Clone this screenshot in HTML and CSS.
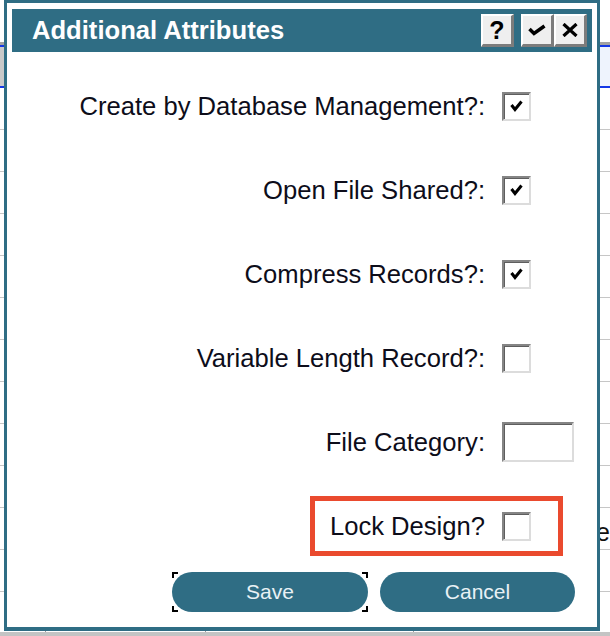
FILE: index.html
```html
<!DOCTYPE html>
<html lang="en">
<head>
    <meta charset="UTF-8">
    <meta name="viewport" content="width=device-width, initial-scale=1.0">
    <title>Additional Attributes</title>
    <link rel="stylesheet" href="styles.css">
</head>
<body>
    <!-- Spreadsheet behind the dialog -->
    <div class="sheet">
        <div class="sheet-head"></div>
        <div class="toolbar"></div>
        <div class="grid"></div>
        <div class="grid-foot"></div>
        <span class="peek">ep</span>
    </div>

    <div class="dialog">
        <div class="titlebar">
            <span class="title">Additional Attributes</span>
            <div class="title-buttons">
                <button class="tb-btn help">?</button>
                <div class="tb-pair">
                    <button class="tb-btn">
                        <svg width="18" height="12" viewBox="0 0 18 12"><polyline points="1.5,5 6,9.5 16.5,2" fill="none" stroke="#000" stroke-width="3.5"/></svg>
                    </button>
                    <button class="tb-btn">
                        <svg width="16" height="14" viewBox="0 0 16 14"><path d="M1.5 1 L14.5 13 M14.5 1 L1.5 13" fill="none" stroke="#000" stroke-width="3.2"/></svg>
                    </button>
                </div>
            </div>
        </div>

        <div class="fields">
            <div class="row">
                <span class="label">Create by Database Management?:</span>
                <span class="ctrl"><span class="check"><svg width="13" height="12" viewBox="0 0 13 12"><polyline points="1.5,5 5,9.5 11.5,1.5" fill="none" stroke="#000" stroke-width="3"/></svg></span></span>
            </div>
            <div class="row">
                <span class="label">Open File Shared?:</span>
                <span class="ctrl"><span class="check"><svg width="13" height="12" viewBox="0 0 13 12"><polyline points="1.5,5 5,9.5 11.5,1.5" fill="none" stroke="#000" stroke-width="3"/></svg></span></span>
            </div>
            <div class="row">
                <span class="label">Compress Records?:</span>
                <span class="ctrl"><span class="check"><svg width="13" height="12" viewBox="0 0 13 12"><polyline points="1.5,5 5,9.5 11.5,1.5" fill="none" stroke="#000" stroke-width="3"/></svg></span></span>
            </div>
            <div class="row">
                <span class="label">Variable Length Record?:</span>
                <span class="ctrl"><span class="check"></span></span>
            </div>
            <div class="row">
                <span class="label">File Category:</span>
                <span class="ctrl"><span class="textbox"></span></span>
            </div>
            <div class="row lock">
                <div class="highlight">
                    <span class="label">Lock Design?</span>
                    <span class="check"></span>
                </div>
            </div>
        </div>

        <div class="actions">
            <button class="pill focused">Save</button>
            <button class="pill cancel">Cancel</button>
        </div>
    </div>
</body>
</html>
```

FILE: styles.css
```css
body {
    margin: 0;
    width: 610px;
    height: 636px;
    overflow: hidden;
    position: relative;
    font-family: "Liberation Sans", Arial, sans-serif;
    background-color: #fff;
}
.sheet {
    height: 636px;
}
.sheet-head {
    height: 42px;
    background-color: #fff;
}
.toolbar {
    height: 46px;
    box-sizing: border-box;
    border-top: 3px solid #a2a2a2;
    border-bottom: 2px solid #1438e6;
    box-shadow: inset 0 2px 0 #1438e6;
    background: linear-gradient(to right, #c9c9c9 0 300px, #eef3fd 300px);
}
.grid {
    height: 544px;
    background:
        linear-gradient(to right, transparent 45px, #9a9a9a 45px 46px, transparent 46px 205px, #9a9a9a 205px 206px, transparent 206px 413px, #9a9a9a 413px 414px, transparent 414px),
        repeating-linear-gradient(to bottom, #fff 0 41px, #c6c6c6 41px 42px);
}
.grid-foot {
    height: 4px;
    background-color: #c4c4c4;
}
.peek {
    position: absolute;
    left: 596px;
    top: 518px;
    font-size: 25px;
    color: #111;
}
.dialog {
    position: absolute;
    left: 4px;
    top: 0;
    width: 596px;
    height: 631px;
    box-sizing: border-box;
    border: 3px solid #2f6d84;
    border-bottom-width: 4px;
    padding: 6px 5px 0 5px;
    background-color: #fff;
}
.titlebar {
    height: 43px;
    display: flex;
    align-items: center;
    justify-content: space-between;
    padding: 0 5px 0 20px;
    background-color: #2f6d84;
}
.title {
    color: #fff;
    font-weight: bold;
    font-size: 25.6px;
}
.title-buttons {
    display: flex;
    gap: 7px;
}
.tb-pair {
    display: flex;
}
.tb-btn {
    width: 33px;
    height: 33px;
    box-sizing: border-box;
    padding: 0;
    display: flex;
    align-items: center;
    justify-content: center;
    background-color: #efefef;
    border-style: solid;
    border-width: 2px 3px 3px 2px;
    border-color: #fff #7c7c7c #7c7c7c #fff;
    font-family: "Liberation Sans", Arial, sans-serif;
    font-weight: bold;
    font-size: 25px;
    color: #000;
}
.fields {
    padding-top: 12px;
}
.row {
    height: 84px;
    display: flex;
    justify-content: flex-end;
    align-items: center;
    padding-right: 18px;
}
.label {
    font-size: 25.6px;
    color: #0d0d1a;
    margin-right: 17px;
}
.ctrl {
    width: 72px;
    display: flex;
}
.check,
.textbox {
    box-sizing: border-box;
    display: flex;
    align-items: center;
    justify-content: center;
    background-color: #fff;
    border: 2px solid;
    border-color: #858585 #dcdcdc #dcdcdc #858585;
    box-shadow: inset 1px 1px 0 #5e5e5e;
}
.check {
    width: 29px;
    height: 29px;
}
.textbox {
    width: 72px;
    height: 40px;
}
.row.lock {
    padding-right: 29px;
}
.highlight {
    height: 60px;
    box-sizing: border-box;
    display: flex;
    align-items: center;
    border: 5px solid #ea4a2e;
    padding: 0 27px 0 15px;
}
.actions {
    display: flex;
    justify-content: flex-end;
    gap: 12px;
    margin-top: 4px;
    padding-right: 17px;
}
.pill {
    position: relative;
    width: 196px;
    height: 40px;
    border: none;
    border-radius: 20px;
    background-color: #2f6d84;
    color: #e8f1f5;
    font-family: "Liberation Sans", Arial, sans-serif;
    font-size: 21px;
    padding: 0;
}
.pill.cancel {
    width: 195px;
}
/* focus corner brackets */
.pill.focused::after {
    content: "";
    position: absolute;
    inset: 0;
    background:
        linear-gradient(#000, #000) left top / 6px 2px no-repeat,
        linear-gradient(#000, #000) left top / 2px 6px no-repeat,
        linear-gradient(#000, #000) right top / 6px 2px no-repeat,
        linear-gradient(#000, #000) right top / 2px 6px no-repeat,
        linear-gradient(#000, #000) left bottom / 6px 2px no-repeat,
        linear-gradient(#000, #000) left bottom / 2px 6px no-repeat,
        linear-gradient(#000, #000) right bottom / 6px 2px no-repeat,
        linear-gradient(#000, #000) right bottom / 2px 6px no-repeat;
}
```
